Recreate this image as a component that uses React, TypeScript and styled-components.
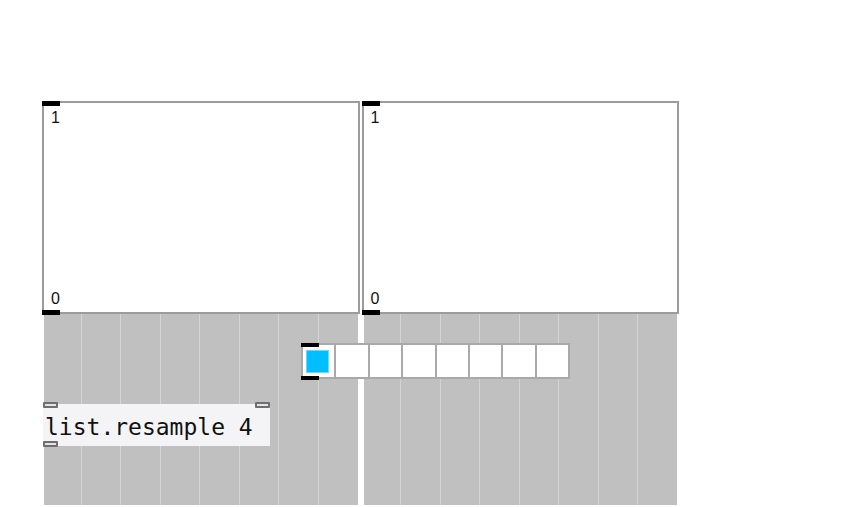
import React from "react";
import styled, { createGlobalStyle } from "styled-components";

const GlobalStyle = createGlobalStyle`
  html, body {
    margin: 0;
    padding: 0;
    background: #ffffff;
  }
  body {
    font-family: "Liberation Sans", Arial, sans-serif;
  }
`;

const Canvas = styled.div`
  position: relative;
  width: 861px;
  height: 507px;
  overflow: hidden;
  background: #ffffff;
  box-sizing: border-box;
  padding: 101px 0 0 42px;
`;

const ChannelRow = styled.div`
  display: flex;
  gap: 2px;
  width: 637px;
`;

const Channel = styled.div`
  display: flex;
  flex-direction: column;
  flex: 1;
`;

const Display = styled.div`
  position: relative;
  box-sizing: border-box;
  height: 213px;
  border: 2px solid #9c9c9c;
  background: #ffffff;
  display: flex;
  flex-direction: column;
  justify-content: space-between;
  padding: 7px 7px 5px 7px;
`;

const ScaleLabel = styled.span`
  font-family: "Liberation Sans", Arial, sans-serif;
  font-size: 16px;
  line-height: 16px;
  color: #111111;
`;

const Handle = styled.div<{ $edge: "top" | "bottom" }>`
  position: absolute;
  left: -2px;
  width: 18px;
  height: 5px;
  background: #000000;
  ${(p) => (p.$edge === "top" ? "top: -2px;" : "bottom: -3px;")}
`;

const Track = styled.div`
  margin: 0 2px;
  height: 191px;
  background: #c0c0c0;
  display: grid;
  grid-template-columns: 37.5px repeat(6, 39.5px) 1fr;
`;

const TrackColumn = styled.div<{ $last?: boolean }>`
  border-right: ${(p) => (p.$last ? "none" : "1px solid #d4d4d4")};
`;

const Sequencer = styled.div`
  position: absolute;
  left: 301px;
  top: 343px;
  width: 269px;
  height: 36px;
  box-sizing: border-box;
  background: #a9a9a9;
  padding: 2px;
  display: grid;
  grid-template-columns: repeat(8, 1fr);
  gap: 2px;
`;

const Step = styled.div`
  background: #ffffff;
  display: flex;
  align-items: center;
  justify-content: center;
`;

const StepMark = styled.div`
  width: 23px;
  height: 23px;
  box-sizing: border-box;
  background: #00bfff;
  border: 1px solid #6fd6ff;
  margin-left: -2px;
`;

const SeqHandle = styled.div<{ $edge: "top" | "bottom" }>`
  position: absolute;
  left: 0;
  width: 18px;
  height: 4px;
  background: #000000;
  ${(p) => (p.$edge === "top" ? "top: 0;" : "bottom: -1px;")}
`;

const ObjectBox = styled.div`
  position: absolute;
  left: 43px;
  top: 404px;
  width: 227px;
  height: 42px;
  box-sizing: border-box;
  background: #f4f4f6;
  padding: 4px 0 0 2px;
  font-family: "DejaVu Sans Mono", "Liberation Mono", monospace;
  font-size: 23px;
  line-height: 38px;
  color: #111111;
  white-space: nowrap;
`;

const Port = styled.div<{ $pos: "inlet-left" | "inlet-right" | "outlet-left" }>`
  position: absolute;
  width: 15px;
  height: 6px;
  box-sizing: border-box;
  border: 2px solid #6e6e6e;
  background: #e4e4e4;
  border-radius: 1px;
  ${(p) =>
    p.$pos === "inlet-left"
      ? "top: -2px; left: 0;"
      : p.$pos === "inlet-right"
      ? "top: -2px; right: 0;"
      : "bottom: -1px; left: 0;"}
`;

const columns = Array.from({ length: 8 }, (_, i) => i);

function ScopeChannel() {
  return (
    <Channel>
      <Display>
        <Handle $edge="top" />
        <ScaleLabel>1</ScaleLabel>
        <ScaleLabel>0</ScaleLabel>
        <Handle $edge="bottom" />
      </Display>
      <Track>
        {columns.map((i) => (
          <TrackColumn key={i} $last={i === 7} />
        ))}
      </Track>
    </Channel>
  );
}

export default function App() {
  return (
    <>
      <GlobalStyle />
      <Canvas>
        <ChannelRow>
          <ScopeChannel />
          <ScopeChannel />
        </ChannelRow>
        <Sequencer>
          {columns.map((i) => (
            <Step key={i}>{i === 0 && <StepMark />}</Step>
          ))}
          <SeqHandle $edge="top" />
          <SeqHandle $edge="bottom" />
        </Sequencer>
        <ObjectBox>
          <Port $pos="inlet-left" />
          <Port $pos="inlet-right" />
          list.resample 4
          <Port $pos="outlet-left" />
        </ObjectBox>
      </Canvas>
    </>
  );
}
